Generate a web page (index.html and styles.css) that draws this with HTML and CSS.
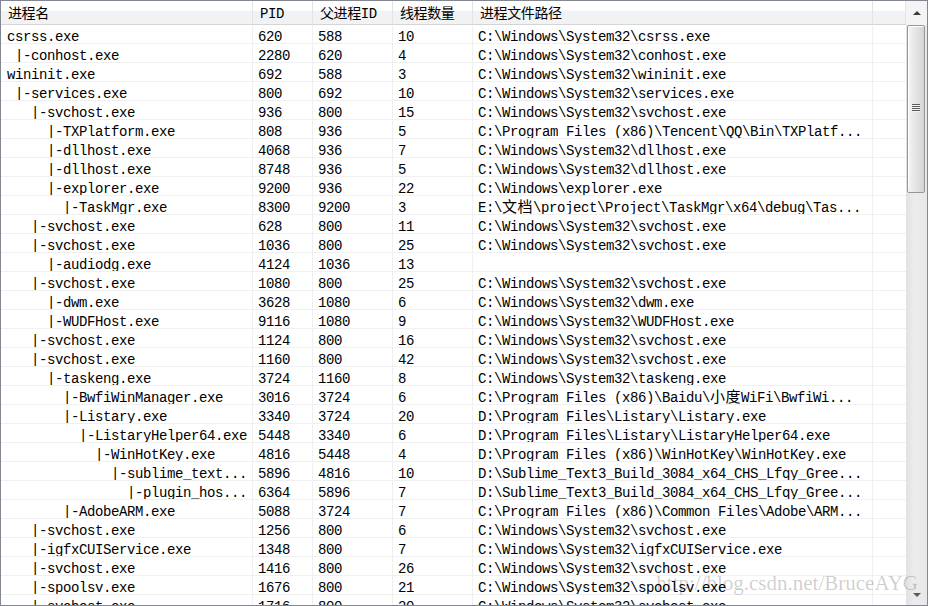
FILE: index.html
```html
<!DOCTYPE html>
<html lang="zh-CN">
    <head>
        <meta charset="UTF-8" />
        <title>TaskMgr - 进程列表</title>
        <link rel="stylesheet" href="styles.css">
    </head>
    <body>
        <div class="listview">
            <div class="grid">
                <div class="row head">
                    <span>进程名</span>
                    <span>PID</span>
                    <span>父进程ID</span>
                    <span>线程数量</span>
                    <span>进程文件路径</span>
                    <span></span>
                </div>
                <div class="row"><span>csrss.exe</span><span>620</span><span>588</span><span>10</span><span>C:\Windows\System32\csrss.exe</span><span></span></div>
                <div class="row"><span> |-conhost.exe</span><span>2280</span><span>620</span><span>4</span><span>C:\Windows\System32\conhost.exe</span><span></span></div>
                <div class="row"><span>wininit.exe</span><span>692</span><span>588</span><span>3</span><span>C:\Windows\System32\wininit.exe</span><span></span></div>
                <div class="row"><span> |-services.exe</span><span>800</span><span>692</span><span>10</span><span>C:\Windows\System32\services.exe</span><span></span></div>
                <div class="row"><span>   |-svchost.exe</span><span>936</span><span>800</span><span>15</span><span>C:\Windows\System32\svchost.exe</span><span></span></div>
                <div class="row"><span>     |-TXPlatform.exe</span><span>808</span><span>936</span><span>5</span><span>C:\Program Files (x86)\Tencent\QQ\Bin\TXPlatf...</span><span></span></div>
                <div class="row"><span>     |-dllhost.exe</span><span>4068</span><span>936</span><span>7</span><span>C:\Windows\System32\dllhost.exe</span><span></span></div>
                <div class="row"><span>     |-dllhost.exe</span><span>8748</span><span>936</span><span>5</span><span>C:\Windows\System32\dllhost.exe</span><span></span></div>
                <div class="row"><span>     |-explorer.exe</span><span>9200</span><span>936</span><span>22</span><span>C:\Windows\explorer.exe</span><span></span></div>
                <div class="row"><span>       |-TaskMgr.exe</span><span>8300</span><span>9200</span><span>3</span><span>E:\<b class="wide">文档</b>\project\Project\TaskMgr\x64\debug\Tas...</span><span></span></div>
                <div class="row"><span>   |-svchost.exe</span><span>628</span><span>800</span><span>11</span><span>C:\Windows\System32\svchost.exe</span><span></span></div>
                <div class="row"><span>   |-svchost.exe</span><span>1036</span><span>800</span><span>25</span><span>C:\Windows\System32\svchost.exe</span><span></span></div>
                <div class="row"><span>     |-audiodg.exe</span><span>4124</span><span>1036</span><span>13</span><span></span><span></span></div>
                <div class="row"><span>   |-svchost.exe</span><span>1080</span><span>800</span><span>25</span><span>C:\Windows\System32\svchost.exe</span><span></span></div>
                <div class="row"><span>     |-dwm.exe</span><span>3628</span><span>1080</span><span>6</span><span>C:\Windows\System32\dwm.exe</span><span></span></div>
                <div class="row"><span>     |-WUDFHost.exe</span><span>9116</span><span>1080</span><span>9</span><span>C:\Windows\System32\WUDFHost.exe</span><span></span></div>
                <div class="row"><span>   |-svchost.exe</span><span>1124</span><span>800</span><span>16</span><span>C:\Windows\System32\svchost.exe</span><span></span></div>
                <div class="row"><span>   |-svchost.exe</span><span>1160</span><span>800</span><span>42</span><span>C:\Windows\System32\svchost.exe</span><span></span></div>
                <div class="row"><span>     |-taskeng.exe</span><span>3724</span><span>1160</span><span>8</span><span>C:\Windows\System32\taskeng.exe</span><span></span></div>
                <div class="row"><span>       |-BwfiWinManager.exe</span><span>3016</span><span>3724</span><span>6</span><span>C:\Program Files (x86)\Baidu\<b class="wide">小度</b>WiFi\BwfiWi...</span><span></span></div>
                <div class="row"><span>       |-Listary.exe</span><span>3340</span><span>3724</span><span>20</span><span>D:\Program Files\Listary\Listary.exe</span><span></span></div>
                <div class="row"><span>         |-ListaryHelper64.exe</span><span>5448</span><span>3340</span><span>6</span><span>D:\Program Files\Listary\ListaryHelper64.exe</span><span></span></div>
                <div class="row"><span>           |-WinHotKey.exe</span><span>4816</span><span>5448</span><span>4</span><span>D:\Program Files (x86)\WinHotKey\WinHotKey.exe</span><span></span></div>
                <div class="row"><span>             |-sublime_text...</span><span>5896</span><span>4816</span><span>10</span><span>D:\Sublime_Text3_Build_3084_x64_CHS_Lfqy_Gree...</span><span></span></div>
                <div class="row"><span>               |-plugin_hos...</span><span>6364</span><span>5896</span><span>7</span><span>D:\Sublime_Text3_Build_3084_x64_CHS_Lfqy_Gree...</span><span></span></div>
                <div class="row"><span>       |-AdobeARM.exe</span><span>5088</span><span>3724</span><span>7</span><span>C:\Program Files (x86)\Common Files\Adobe\ARM...</span><span></span></div>
                <div class="row"><span>   |-svchost.exe</span><span>1256</span><span>800</span><span>6</span><span>C:\Windows\System32\svchost.exe</span><span></span></div>
                <div class="row"><span>   |-igfxCUIService.exe</span><span>1348</span><span>800</span><span>7</span><span>C:\Windows\System32\igfxCUIService.exe</span><span></span></div>
                <div class="row"><span>   |-svchost.exe</span><span>1416</span><span>800</span><span>26</span><span>C:\Windows\System32\svchost.exe</span><span></span></div>
                <div class="row"><span>   |-spoolsv.exe</span><span>1676</span><span>800</span><span>21</span><span>C:\Windows\System32\spoolsv.exe</span><span></span></div>
                <div class="row"><span>   |-svchost.exe</span><span>1716</span><span>800</span><span>20</span><span>C:\Windows\System32\svchost.exe</span><span></span></div>
            </div>

            <div class="vscroll">
                <div class="btn up"></div>
                <div class="thumb"><span class="grip"></span></div>
                <div class="track"></div>
                <div class="btn down"></div>
            </div>

            <div class="watermark">http://blog.csdn.net/BruceAYG</div>
        </div>
    </body>
</html>
```

FILE: styles.css
```css
* {
    margin: 0;
    padding: 0;
    box-sizing: border-box;
}
body {
    background: #fff;
    font-family: 'Liberation Mono', 'Noto Sans CJK SC', monospace;
    font-size: 14px;
    letter-spacing: -0.4px;
    color: #000;
}
.listview {
    position: relative;
    display: flex;
    width: 928px;
    height: 606px;
    border: 1px solid #828790;
    overflow: hidden;
}
.grid {
    flex: 1;
    overflow: hidden;
}
.row {
    display: grid;
    grid-template-columns: 252px 60px 80px 80px 400px 1fr;
}
.row span {
    height: 19px;
    padding: 6px 0 0 5px;
    line-height: 12px;
    white-space: pre;
    overflow: hidden;
    border-right: 1px solid #f0f0f0;
    border-bottom: 1px solid #f0f0f0;
}
.row span:first-child {
    padding-left: 6px;
}
.row span:last-child {
    border-right: none;
}
.wide {
    font-weight: normal;
    font-size: 15px;
    letter-spacing: 0.5px;
}
.row.head span {
    height: 24px;
    padding: 6px 0 0 7px;
    line-height: 14px;
    background: linear-gradient(#fff 0, #fff 40%, #f1f2f4 45%, #f1f2f4 100%);
    border-right: 1px solid #e3e4e6;
    border-bottom: 1px solid #d5d5d5;
}

/* scrollbar */
.vscroll {
    width: 21px;
    display: flex;
    flex-direction: column;
    background: linear-gradient(to right, #e2e2e2, #ececec 40%, #e8e8e8);
}
.vscroll .btn {
    height: 24px;
    display: flex;
    align-items: center;
    justify-content: center;
    background: #f4f4f4;
}
.vscroll .btn::after {
    content: '';
    width: 0;
    height: 0;
    border-left: 4px solid transparent;
    border-right: 4px solid transparent;
}
.vscroll .up::after {
    border-bottom: 4px solid #3c3c3c;
}
.vscroll .down {
    background: transparent;
}
.vscroll .down::after {
    border-top: 4px solid #5a5a5a;
    margin-top: 4px;
}
.vscroll .thumb {
    height: 168px;
    margin: 0 2px 0 1px;
    display: flex;
    align-items: center;
    justify-content: center;
    border: 1px solid #979797;
    border-radius: 2px;
    background: linear-gradient(to right, #f4f4f4 0, #e6e6e6 45%, #d4d4d4 100%);
    box-shadow: inset 1px 1px 0 #fff;
}
.vscroll .grip {
    width: 8px;
    height: 8px;
    margin-top: -2px;
    background: repeating-linear-gradient(#5c5c5c 0, #5c5c5c 1px, #f2f2f2 1px, #f2f2f2 2px);
}
.vscroll .track {
    flex: 1;
}

.watermark {
    position: absolute;
    right: 9px;
    bottom: 11px;
    font-family: 'Liberation Serif', serif;
    font-size: 21px;
    line-height: 21px;
    letter-spacing: 0;
    color: rgba(0, 0, 0, 0.2);
    pointer-events: none;
}
```
